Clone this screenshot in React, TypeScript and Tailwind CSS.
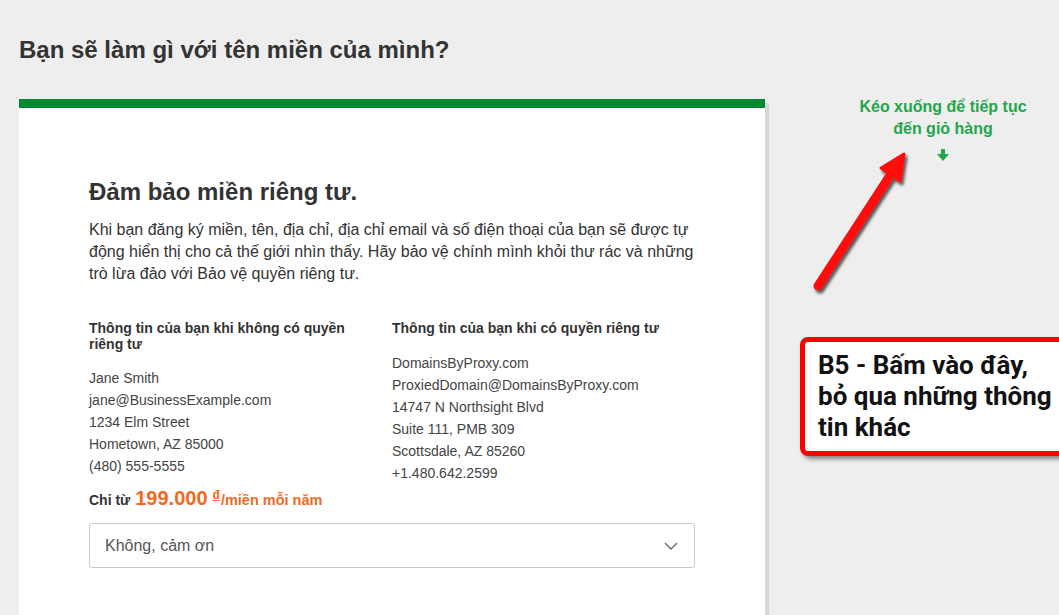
const withoutPrivacy = [
  "Jane Smith",
  "jane@BusinessExample.com",
  "1234 Elm Street",
  "Hometown, AZ 85000",
  "(480) 555-5555",
];

const withPrivacy = [
  "DomainsByProxy.com",
  "ProxiedDomain@DomainsByProxy.com",
  "14747 N Northsight Blvd",
  "Suite 111, PMB 309",
  "Scottsdale, AZ 85260",
  "+1.480.642.2599",
];

function RedArrow() {
  return (
    <svg
      className="pointer-events-none absolute left-0 top-0"
      width="1059"
      height="615"
      viewBox="0 0 1059 615"
    >
      <defs>
        <filter id="arrowShadow" x="-20%" y="-20%" width="140%" height="140%">
          <feDropShadow dx="2" dy="3" stdDeviation="1.5" floodColor="#000" floodOpacity="0.65" />
        </filter>
      </defs>
      <g filter="url(#arrowShadow)">
        <line x1="818" y1="286" x2="891" y2="174" stroke="#ff1010" strokeWidth="9" strokeLinecap="round" />
        <polygon points="904,154 881,168 900,181" fill="#ff1010" stroke="#ff1010" strokeWidth="3" strokeLinejoin="round" />
      </g>
    </svg>
  );
}

export default function App() {
  return (
    <div className="relative h-[615px] w-[1059px] overflow-hidden bg-[#eeeeee] font-['Liberation_Sans',Arial,sans-serif]">
      <div className="pl-[19px] pt-[36px]">
        <h1 className="text-[24px] font-bold leading-[28px] text-[#333]">
          Bạn sẽ làm gì với tên miền của mình?
        </h1>

        <div className="mt-[35px] flex items-start">
          <div className="w-[746px] shrink-0 border-t-[9px] border-[#008a32] bg-white px-[70px] pb-[60px] pt-[70px] shadow-[4px_4px_0_#d6d6d6]">
            <h2 className="text-[24px] font-bold leading-[28px] text-[#333]">
              Đảm bảo miền riêng tư.
            </h2>
            <p className="mt-[13px] text-[16px] leading-[22px] text-[#333]">
              Khi bạn đăng ký miền, tên, địa chỉ, địa chỉ email và số điện thoại của bạn sẽ được tự
              động hiển thị cho cả thế giới nhìn thấy. Hãy bảo vệ chính mình khỏi thư rác và những
              trò lừa đảo với Bảo vệ quyền riêng tư.
            </p>

            <div className="mt-[35px] grid grid-cols-2">
              <div className="pr-[30px]">
                <h3 className="text-[14px] font-bold leading-[16px] text-[#333]">
                  Thông tin của bạn khi không có quyền riêng tư
                </h3>
                <ul className="mt-[15px] text-[14px] leading-[22px] text-[#444]">
                  {withoutPrivacy.map((line) => (
                    <li key={line}>{line}</li>
                  ))}
                </ul>
              </div>
              <div>
                <h3 className="text-[14px] font-bold leading-[16px] text-[#333]">
                  Thông tin của bạn khi có quyền riêng tư
                </h3>
                <ul className="mt-[16px] text-[14px] leading-[22px] text-[#444]">
                  {withPrivacy.map((line) => (
                    <li key={line}>{line}</li>
                  ))}
                </ul>
              </div>
            </div>

            <div className="mt-[2px] flex items-baseline gap-[5px] font-bold leading-[24px]">
              <span className="text-[14px] text-[#333]">Chỉ từ</span>
              <span className="text-[20px] text-[#ef6a1f]">199.000</span>
              <span className="text-[14.5px] text-[#ef6a1f]">
                <sup className="relative -top-[6px] mr-[1px] text-[12px] underline">đ</sup>/miền mỗi năm
              </span>
            </div>

            <div className="mt-[11px] flex h-[45px] items-center justify-between rounded-[3px] border border-[#c8c8c8] pl-[15px] pr-[16px]">
              <span className="text-[16px] text-[#555]">Không, cảm ơn</span>
              <svg width="14" height="8" viewBox="0 0 14 8">
                <polyline points="1,1 7,7 13,1" fill="none" stroke="#666" strokeWidth="1.4" />
              </svg>
            </div>
          </div>

          <div className="ml-[28px] w-[300px] shrink-0 -mt-[3px] text-center">
            <p className="text-[16px] font-bold leading-[22px] text-[#22a64a]">
              Kéo xuống để tiếp tục
              <br />
              đến giỏ hàng
            </p>
            <svg className="mx-auto mt-[9px]" width="12" height="12" viewBox="0 0 12 12">
              <rect x="4" y="0" width="4" height="6" fill="#1ea84a" />
              <polygon points="0,5 12,5 6,12" fill="#1ea84a" />
            </svg>
          </div>
        </div>
      </div>

      <RedArrow />

      <div className="absolute left-[800px] top-[337px] w-[300px] rounded-[8px] border-[5px] border-[#ff0000] bg-white py-[8px] pl-[13px] shadow-[3px_3px_4px_rgba(0,0,0,0.45)]">
        <p className="whitespace-nowrap font-['Roboto',sans-serif] text-[26px] font-bold leading-[31px] text-[#111]">
          B5 - Bấm vào đây,
          <br />
          bỏ qua những thông
          <br />
          tin khác
        </p>
      </div>
    </div>
  );
}
